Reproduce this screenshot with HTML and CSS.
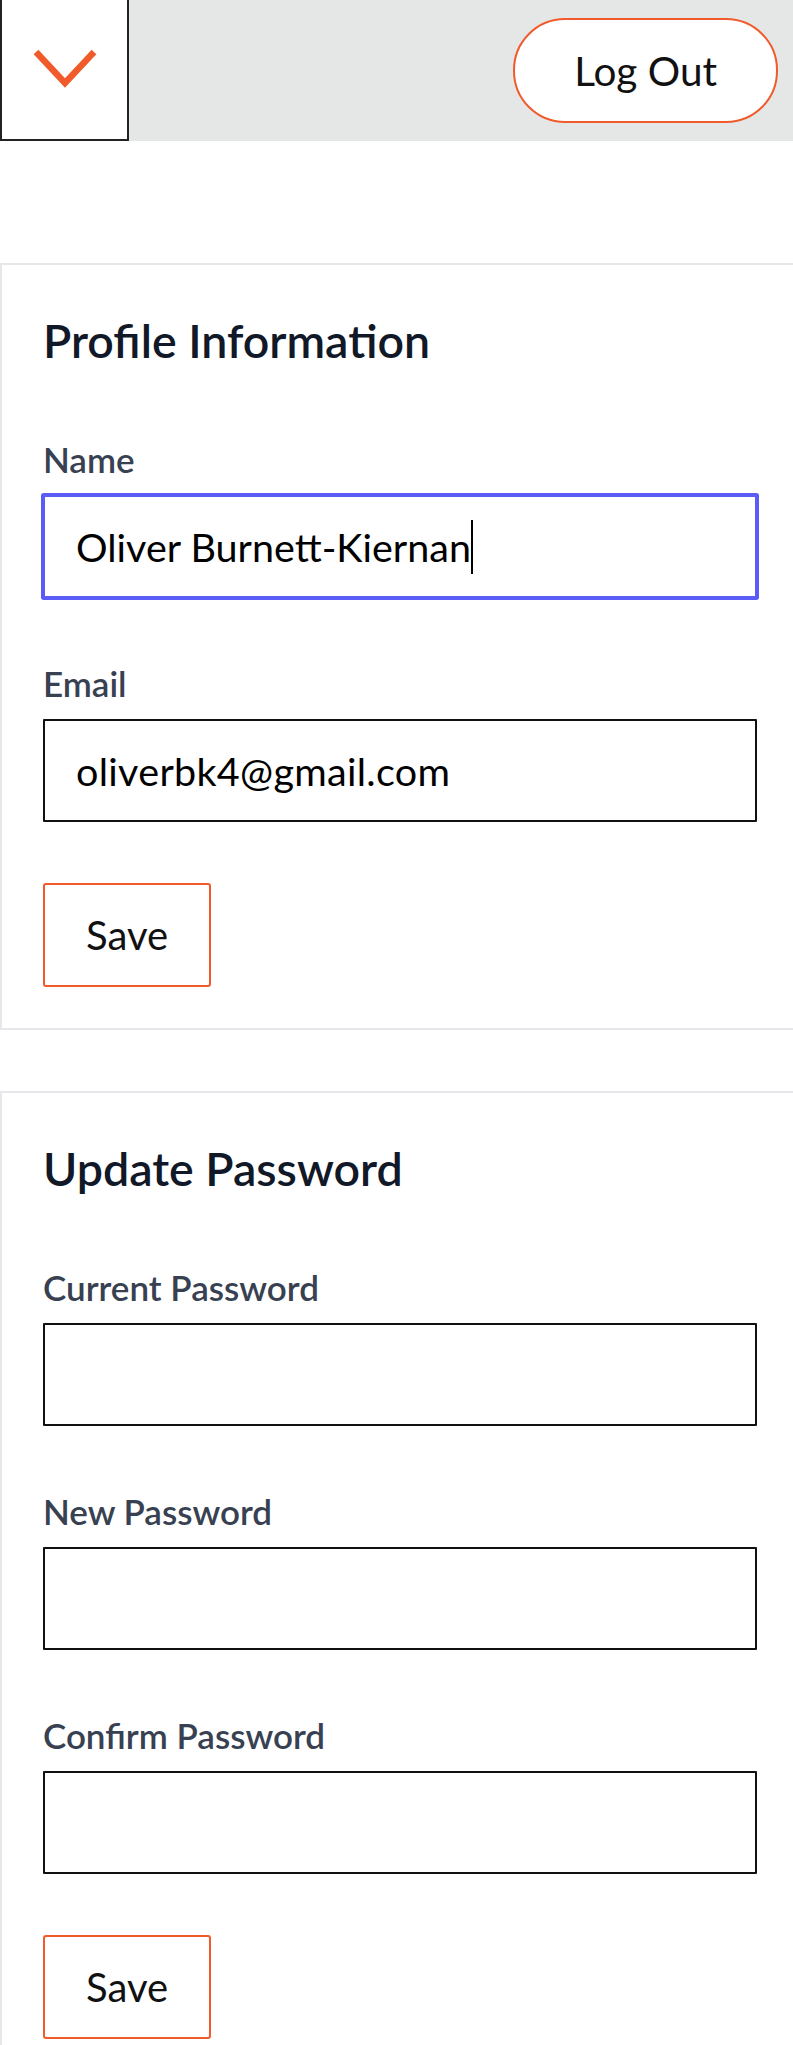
FILE: index.html
```html
<!DOCTYPE html>
<html lang="en">
<head>
  <meta charset="UTF-8" />
  <meta name="viewport" content="width=device-width, initial-scale=1.0"/>
  <title>Profile</title>
  <link rel="stylesheet" href="styles.css">
</head>
<body>
  <header class="top-bar">
    <button class="menu-toggle" aria-label="Open menu">
      <svg width="64" height="40" viewBox="0 0 64 40">
        <polyline points="3,3 32,34 61,3" fill="none" stroke="#f15a2b" stroke-width="6.5" stroke-linecap="butt" stroke-linejoin="miter"/>
      </svg>
    </button>
    <button class="logout-btn">Log Out</button>
  </header>

  <main class="page">
    <section class="card">
      <h2>Profile Information</h2>
      <form>
        <div class="field">
          <label for="name">Name</label>
          <div class="input-wrap">
            <input id="name" class="focused" type="text" value="Oliver Burnett-Kiernan">
            <span class="caret" aria-hidden="true"><span class="ghost">Oliver Burnett-Kiernan</span></span>
          </div>
        </div>
        <div class="field">
          <label for="email">Email</label>
          <input id="email" type="email" value="oliverbk4@gmail.com">
        </div>
        <button type="button" class="save-btn">Save</button>
      </form>
    </section>

    <section class="card">
      <h2>Update Password</h2>
      <form>
        <div class="field">
          <label for="current">Current Password</label>
          <input id="current" type="password">
        </div>
        <div class="field">
          <label for="new">New Password</label>
          <input id="new" type="password">
        </div>
        <div class="field">
          <label for="confirm">Confirm Password</label>
          <input id="confirm" type="password">
        </div>
        <button type="button" class="save-btn">Save</button>
      </form>
    </section>
  </main>
</body>
</html>
```

FILE: styles.css
```css
html, body {
  margin: 0;
  padding: 0;
  background: #fff;
  font-family: 'Lato', 'Liberation Sans', sans-serif;
}

.top-bar {
  height: 141px;
  background-color: #e5e7e6;
  display: flex;
  justify-content: space-between;
  align-items: center;
}

.menu-toggle {
  box-sizing: border-box;
  width: 129px;
  height: 141px;
  background: #fff;
  border: 2px solid #222;
  border-top: none;
  padding: 0;
  display: flex;
  align-items: center;
  justify-content: center;
  padding-bottom: 2px;
}

.logout-btn {
  box-sizing: border-box;
  height: 105px;
  margin-right: 15px;
  padding: 0 59px;
  background: #fff;
  border: 2px solid #f15a2b;
  border-radius: 52px;
  font-family: inherit;
  font-size: 40.5px;
  color: #111;
}

.page {
  padding-top: 122px;
}

.card {
  border: 2px solid #e5e7eb;
  border-right: none;
  padding: 48px 36px 41px 41px;
  margin-bottom: 61px;
}

h2 {
  margin: 0 0 71px 0;
  font-size: 46.5px;
  line-height: 54px;
  font-weight: 600;
  color: #111827;
}

.field {
  margin-bottom: 64px;
}

.field:last-of-type {
  margin-bottom: 61px;
}

label {
  display: block;
  font-size: 35px;
  line-height: 42px;
  font-weight: 600;
  color: #374151;
  margin-bottom: 15px;
}

input {
  box-sizing: border-box;
  display: block;
  width: 100%;
  height: 103px;
  border: 2px solid #111;
  border-radius: 1px;
  padding: 0 31px;
  font-family: inherit;
  font-size: 39.5px;
  color: #000;
  background: #fff;
  outline: none;
}

#email {
  letter-spacing: 0.3px;
}

input.focused {
  border-color: #5b5cf6;
  box-shadow: 0 0 0 2px #5b5cf6;
}

.input-wrap {
  position: relative;
}

.caret {
  position: absolute;
  left: 33px;
  top: 0;
  height: 100%;
  display: flex;
  align-items: center;
  pointer-events: none;
  font-size: 39.5px;
}

.ghost {
  color: transparent;
  border-right: 2px solid #000;
  line-height: 54px;
}

.save-btn {
  box-sizing: border-box;
  height: 104px;
  padding: 0 41px;
  background: #fff;
  border: 2px solid #f15a2b;
  border-radius: 3px;
  font-family: inherit;
  font-size: 40px;
  color: #111;
}
```
